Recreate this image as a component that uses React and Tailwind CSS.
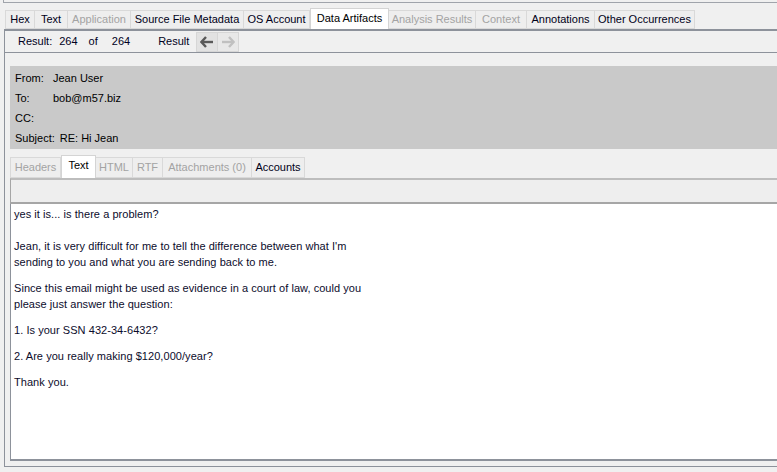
import React from "react";

const TOP_TABS = [
  { label: "Hex", w: 30 },
  { label: "Text", w: 33 },
  { label: "Application", w: 63, disabled: true },
  { label: "Source File Metadata", w: 113 },
  { label: "OS Account", w: 66 },
  { label: "Data Artifacts", w: 79, active: true },
  { label: "Analysis Results", w: 87, disabled: true },
  { label: "Context", w: 51, disabled: true },
  { label: "Annotations", w: 68 },
  { label: "Other Occurrences", w: 100 },
];

const SUB_TABS = [
  { label: "Headers", w: 51, disabled: true },
  { label: "Text", w: 35, active: true },
  { label: "HTML", w: 37, disabled: true },
  { label: "RTF", w: 30, disabled: true },
  { label: "Attachments (0)", w: 89, disabled: true },
  { label: "Accounts", w: 53 },
];

function Tab({ label, w, h, active, disabled, first }) {
  if (active) {
    return (
      <div
        style={{ width: w, height: h + 2 }}
        className="flex items-start justify-center pt-[4px] bg-white border border-b-0 border-[#d4d4d4] text-black"
      >
        {label}
      </div>
    );
  }
  return (
    <div
      style={{ width: w, height: h }}
      className={
        "flex items-center justify-center bg-[#eeeeee] border-y border-r border-[#d9d9d9] " +
        (first ? "border-l " : "") +
        (disabled ? "text-[#a3a3a3]" : "text-[#000018]")
      }
    >
      {label}
    </div>
  );
}

function ArrowLeft({ color }) {
  return (
    <svg width="14" height="12" viewBox="0 0 14 12">
      <path d="M6 1 L1.5 6 L6 11" fill="none" stroke={color} strokeWidth="2.4" />
      <path d="M2 6 H13" stroke={color} strokeWidth="2.4" />
    </svg>
  );
}

function ArrowRight({ color }) {
  return (
    <svg width="14" height="12" viewBox="0 0 14 12">
      <path d="M8 1 L12.5 6 L8 11" fill="none" stroke={color} strokeWidth="2.4" />
      <path d="M1 6 H12" stroke={color} strokeWidth="2.4" />
    </svg>
  );
}

export default function App() {
  return (
    <div className="w-[777px] h-[472px] overflow-hidden bg-[#f0f0f0] text-[11px] leading-none font-['Liberation_Sans',Arial,sans-serif]">
      {/* bottom edge of the panel above */}
      <div className="ml-[3px] h-[3px] border-l border-b border-[#a0a4ab]" />

      {/* top tabs */}
      <div className="mt-[5px] pl-[5px] h-[21px] flex items-end">
        {TOP_TABS.map((t, i) => (
          <Tab key={t.label} {...t} h={19} first={i === 0} />
        ))}
      </div>

      {/* content panel */}
      <div className="ml-[4px] h-[438px] border-l border-t-2 border-b border-[#8d929b] flex flex-col">
        {/* result toolbar */}
        <div className="h-[22px] shrink-0 border-b border-[#8d929b] flex items-center text-[#000022]">
          <span className="ml-[13px]">Result:</span>
          <span className="ml-[7px]">264</span>
          <span className="ml-[11px]">of</span>
          <span className="ml-[14px]">264</span>
          <span className="ml-[28px]">Result</span>
          <div className="ml-[7px] h-[20px] flex items-center border border-[#d6d6d6] bg-[#e8e8e8]">
            <div className="w-[21px] h-full flex items-center justify-center border-r border-[#d6d6d6] bg-[#e2e2e2]">
              <ArrowLeft color="#595959" />
            </div>
            <div className="w-[20px] h-full flex items-center justify-center">
              <ArrowRight color="#c0c0c0" />
            </div>
          </div>
        </div>

        {/* email header */}
        <div className="mt-[13px] ml-[5px] h-[83px] shrink-0 bg-[#c9c9c9] pt-[7px] pl-[5px] text-black flex flex-col gap-[9px]">
          <div className="h-[11px] flex">
            <span className="w-[38px]">From:</span>
            <span>Jean User</span>
          </div>
          <div className="h-[11px] flex">
            <span className="w-[38px]">To:</span>
            <span>bob@m57.biz</span>
          </div>
          <div className="h-[11px] flex">
            <span className="w-[38px]">CC:</span>
            <span></span>
          </div>
          <div className="h-[11px] flex">
            <span>Subject:</span>
            <span className="ml-[5px]">RE: Hi Jean</span>
          </div>
        </div>

        {/* sub tabs */}
        <div className="mt-[7px] ml-[5px] h-[22px] shrink-0 flex items-end">
          {SUB_TABS.map((t, i) => (
            <Tab key={t.label} {...t} h={21} first={i === 0} />
          ))}
        </div>

        {/* blank strip */}
        <div className="ml-[5px] h-[26px] shrink-0 border-l border-t-2 border-b-2 border-[#a6a6a6] border-t-[#bdbdbd] bg-[#eeeeee]" />

        {/* message body */}
        <div className="ml-[5px] mb-[5px] flex-1 bg-white border-l border-b-2 border-[#8d929b] pl-[3px] pt-[2px] text-[#0c0c2c] leading-[16px] tracking-[0.05px]">
          <p>yes it is... is there a problem?</p>
          <p className="mt-[16px]">
            Jean, it is very difficult for me to tell the difference between what I'm
            <br />
            sending to you and what you are sending back to me.
          </p>
          <p className="mt-[10px]">
            Since this email might be used as evidence in a court of law, could you
            <br />
            please just answer the question:
          </p>
          <p className="mt-[10px]">1. Is your SSN 432-34-6432?</p>
          <p className="mt-[10px]">2. Are you really making $120,000/year?</p>
          <p className="mt-[10px]">Thank you.</p>
        </div>
      </div>
    </div>
  );
}
